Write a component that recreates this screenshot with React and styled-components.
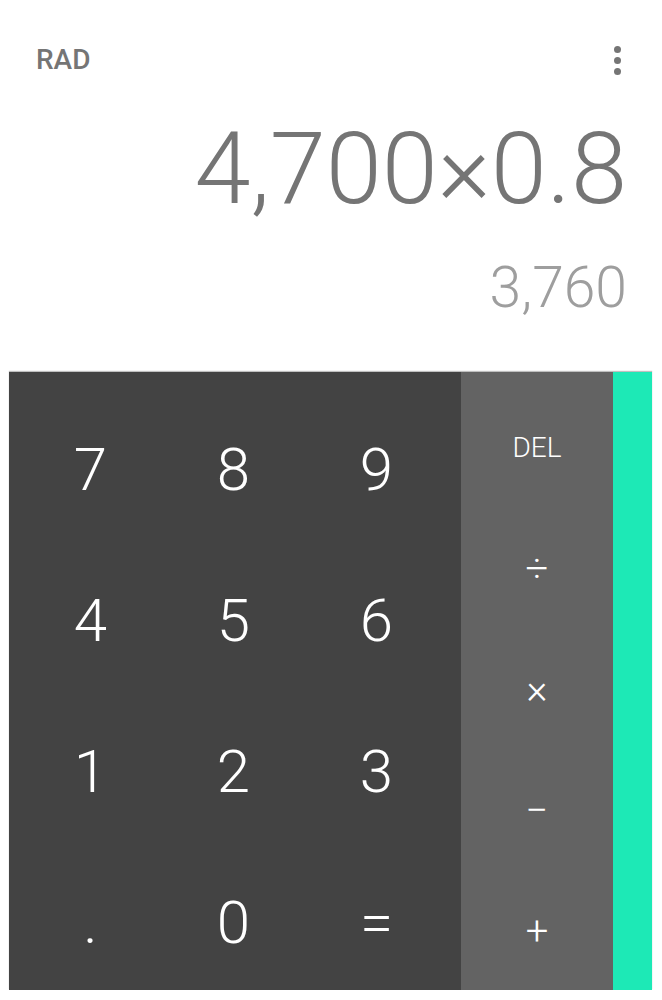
import styled, { createGlobalStyle } from "styled-components";

const GlobalStyle = createGlobalStyle`
  html, body {
    margin: 0;
    padding: 0;
    background: #ffffff;
  }
  body {
    font-family: Roboto, "Noto Sans", sans-serif;
  }
`;

const Screen = styled.div`
  width: 662px;
  height: 1000px;
  padding: 0 10px 0 9px;
  box-sizing: border-box;
  display: flex;
  flex-direction: column;
  overflow: hidden;
`;

const Display = styled.div`
  display: flex;
  flex-direction: column;
  padding: 41px 25px 0 27px;
`;

const TopBar = styled.div`
  display: flex;
  align-items: center;
  justify-content: space-between;
  height: 38px;
`;

const Mode = styled.span`
  font-size: 28px;
  font-weight: 500;
  color: #757575;
  line-height: 38px;
`;

const Overflow = styled.div`
  display: flex;
  flex-direction: column;
  align-items: center;
  gap: 4px;
  width: 14px;
  margin-right: 3px;

  span {
    width: 7px;
    height: 7px;
    border-radius: 50%;
    background: #757575;
  }
`;

const Formula = styled.div`
  margin-top: 39px;
  text-align: right;
  font-size: 101px;
  font-weight: 300;
  line-height: 101px;
  color: #757575;
  white-space: nowrap;
`;

const Result = styled.div`
  margin-top: 40px;
  text-align: right;
  font-size: 57px;
  font-weight: 300;
  line-height: 58px;
  color: #9e9e9e;
`;

const Pad = styled.div`
  margin-top: 55px;
  height: 618px;
  display: flex;
  box-shadow: 0 -1px 1px rgba(0, 0, 0, 0.25);
`;

const Numbers = styled.div`
  width: 452px;
  background: #434343;
  box-sizing: border-box;
  padding: 22px 0 0 10px;
  display: grid;
  grid-template-columns: repeat(3, 143px);
  grid-template-rows: repeat(4, 151px);
  overflow: hidden;
`;

const Operators = styled.div`
  width: 152px;
  background: #636363;
  box-sizing: border-box;
  padding-top: 15px;
  display: grid;
  grid-template-rows: repeat(5, 121px);
  overflow: hidden;
`;

const Drawer = styled.div`
  flex: 1;
  background: #1de9b6;
`;

const Key = styled.div`
  display: flex;
  align-items: center;
  justify-content: center;
  color: #ffffff;
  font-weight: 300;
  font-size: ${(p) => p.$size || 60}px;
  line-height: 1;
`;

const digits = ["7", "8", "9", "4", "5", "6", "1", "2", "3", ".", "0", "="];
const ops = [
  { label: "DEL", size: 28 },
  { label: "÷", size: 40 },
  { label: "×", size: 40 },
  { label: "−", size: 40 },
  { label: "+", size: 40 },
];

export default function App() {
  return (
    <>
      <GlobalStyle />
      <Screen>
        <Display>
          <TopBar>
            <Mode>RAD</Mode>
            <Overflow>
              <span />
              <span />
              <span />
            </Overflow>
          </TopBar>
          <Formula>4,700×0.8</Formula>
          <Result>3,760</Result>
        </Display>
        <Pad>
          <Numbers>
            {digits.map((d) => (
              <Key key={d}>{d}</Key>
            ))}
          </Numbers>
          <Operators>
            {ops.map((o) => (
              <Key key={o.label} $size={o.size}>
                {o.label}
              </Key>
            ))}
          </Operators>
          <Drawer />
        </Pad>
      </Screen>
    </>
  );
}
